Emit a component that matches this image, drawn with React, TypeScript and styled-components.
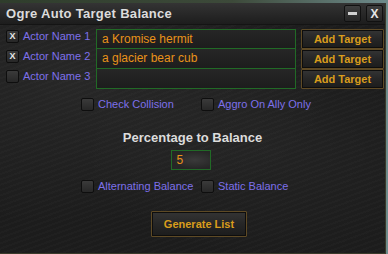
import React, { useState } from "react";
import styled, { createGlobalStyle } from "styled-components";

const GlobalStyle = createGlobalStyle`
  html, body {
    margin: 0;
    padding: 0;
    width: 388px;
    height: 254px;
    overflow: hidden;
    background: linear-gradient(90deg, #2f3d2c 0%, #3d4a3a 60%, #6e8b8c 100%);
  }
  * { box-sizing: border-box; }
`;

const colors = {
  label: "#7d70ea",
  value: "#e8921a",
  gold: "#d99d1c",
  title: "#dcdcdc",
  green: "#216a26",
  brown: "#5e4a25",
};

const font = `"Liberation Sans", Arial, sans-serif`;

const Window = styled.div`
  margin-top: 3px;
  width: 386px;
  height: 251px;
  display: flex;
  flex-direction: column;
  background:
    radial-gradient(ellipse at 20% 30%, rgba(255, 255, 255, 0.05), transparent 60%),
    radial-gradient(ellipse at 70% 60%, rgba(255, 255, 255, 0.03), transparent 50%),
    repeating-linear-gradient(160deg, rgba(255, 255, 255, 0.015) 0 2px, transparent 2px 5px),
    #1c1c1c;
  border-right: 1px solid #3a3a2a;
  border-bottom: 1px solid #3a3a2a;
  font-family: ${font};
  user-select: none;
`;

const TitleBar = styled.div`
  height: 22px;
  display: flex;
  align-items: center;
  justify-content: space-between;
  padding: 0 2px 0 6px;
  background: linear-gradient(180deg, #343434 0%, #262626 60%, #1d1d1d 100%);
  border-bottom: 1px solid #141414;
`;

const Title = styled.div`
  color: ${colors.title};
  font-size: 13px;
  font-weight: bold;
  letter-spacing: 0.3px;
`;

const TitleButtons = styled.div`
  display: flex;
  gap: 5px;
`;

const TitleButton = styled.div`
  width: 17px;
  height: 17px;
  border: 1px solid #111;
  border-radius: 2px;
  background: linear-gradient(180deg, #3e3e3e 0%, #262626 100%);
  color: #e6e6e6;
  font-size: 12px;
  font-weight: bold;
  display: flex;
  align-items: center;
  justify-content: center;
`;

const MinusBar = styled.div`
  width: 9px;
  height: 3px;
  background: #d0d0d0;
`;

const Body = styled.div`
  flex: 1;
  display: flex;
  flex-direction: column;
  padding: 4px 2px 0 6px;
`;

const ActorGrid = styled.div`
  display: grid;
  grid-template-columns: 90px 200px 88px;
`;

const ActorLabel = styled.label`
  display: flex;
  align-items: flex-start;
  gap: 4px;
  padding-top: 1px;
  color: ${colors.label};
  font-size: 11px;
  line-height: 13px;
`;

const Box = styled.span`
  width: 13px;
  height: 13px;
  flex: none;
  border: 1px solid #0e0e0e;
  border-radius: 2px;
  background: linear-gradient(180deg, #3a3a3a 0%, #272727 100%);
  color: #e8e8e8;
  font-size: 9px;
  font-weight: bold;
  line-height: 11px;
  text-align: center;
`;

const TextField = styled.div<{ $top: boolean }>`
  height: ${(p) => (p.$top ? 20 : 21)}px;
  margin-top: ${(p) => (p.$top ? 0 : -1)}px;
  border: 1px solid ${colors.green};
  background: linear-gradient(180deg, #262626 0%, #1d1d1d 100%);
  color: ${colors.value};
  font-size: 12px;
  line-height: 18px;
  padding-left: 5px;
  white-space: nowrap;
  overflow: hidden;
`;

const GoldButton = styled.div<{ $w: number; $h: number }>`
  width: ${(p) => p.$w}px;
  height: ${(p) => p.$h}px;
  border: 1px solid ${colors.brown};
  border-radius: 1px;
  box-shadow: inset 0 0 0 1px #0d0d0d;
  background: linear-gradient(180deg, #343434 0%, #262626 50%, #1c1c1c 100%);
  color: ${colors.gold};
  font-size: 11px;
  font-weight: bold;
  display: flex;
  align-items: center;
  justify-content: center;
`;

const AddCell = styled.div`
  padding-left: 5px;
`;

const OptionRow = styled.div<{ $mt: number }>`
  display: grid;
  grid-template-columns: 120px 140px;
  padding-left: 75px;
  margin-top: ${(p) => p.$mt}px;
`;

const Option = styled.label`
  display: flex;
  align-items: center;
  gap: 4px;
  color: ${colors.label};
  font-size: 11px;
  line-height: 13px;
`;

const Heading = styled.div`
  margin-top: 19px;
  text-align: center;
  color: ${colors.title};
  font-size: 13px;
  font-weight: bold;
  padding-right: 4px;
`;

const PercentRow = styled.div`
  display: flex;
  justify-content: center;
  margin-top: 5px;
  padding-right: 8px;
`;

const PercentField = styled.div`
  width: 40px;
  height: 20px;
  border: 1px solid ${colors.green};
  background: radial-gradient(ellipse at 60% 50%, #3a3a3a 0%, #262626 70%);
  color: ${colors.value};
  font-size: 12px;
  line-height: 18px;
  padding-left: 5px;
`;

const GenerateRow = styled.div`
  display: flex;
  justify-content: center;
  margin-top: 18px;
  padding-left: 9px;
`;

const actors = [
  { name: "Actor Name 1", value: "a Kromise hermit", checked: true },
  { name: "Actor Name 2", value: "a glacier bear cub", checked: true },
  { name: "Actor Name 3", value: "", checked: false },
];

const Check: React.FC<{ on: boolean }> = ({ on }) => <Box>{on ? "X" : ""}</Box>;

const App: React.FC = () => {
  const [opts] = useState({ collision: false, aggro: false, alternating: false, stat: false });

  return (
    <>
      <GlobalStyle />
      <Window>
        <TitleBar>
          <Title>Ogre Auto Target Balance</Title>
          <TitleButtons>
            <TitleButton>
              <MinusBar />
            </TitleButton>
            <TitleButton>X</TitleButton>
          </TitleButtons>
        </TitleBar>
        <Body>
          <ActorGrid>
            {actors.map((a, i) => (
              <React.Fragment key={a.name}>
                <ActorLabel>
                  <Check on={a.checked} />
                  {a.name}
                </ActorLabel>
                <TextField $top={i === 0}>{a.value}</TextField>
                <AddCell>
                  <GoldButton $w={83} $h={20}>Add Target</GoldButton>
                </AddCell>
              </React.Fragment>
            ))}
          </ActorGrid>

          <OptionRow $mt={9}>
            <Option>
              <Check on={opts.collision} />
              Check Collision
            </Option>
            <Option>
              <Check on={opts.aggro} />
              Aggro On Ally Only
            </Option>
          </OptionRow>

          <Heading>Percentage to Balance</Heading>
          <PercentRow>
            <PercentField>5</PercentField>
          </PercentRow>

          <OptionRow $mt={10}>
            <Option>
              <Check on={opts.alternating} />
              Alternating Balance
            </Option>
            <Option>
              <Check on={opts.stat} />
              Static Balance
            </Option>
          </OptionRow>

          <GenerateRow>
            <GoldButton $w={96} $h={26}>Generate List</GoldButton>
          </GenerateRow>
        </Body>
      </Window>
    </>
  );
};

export default App;
